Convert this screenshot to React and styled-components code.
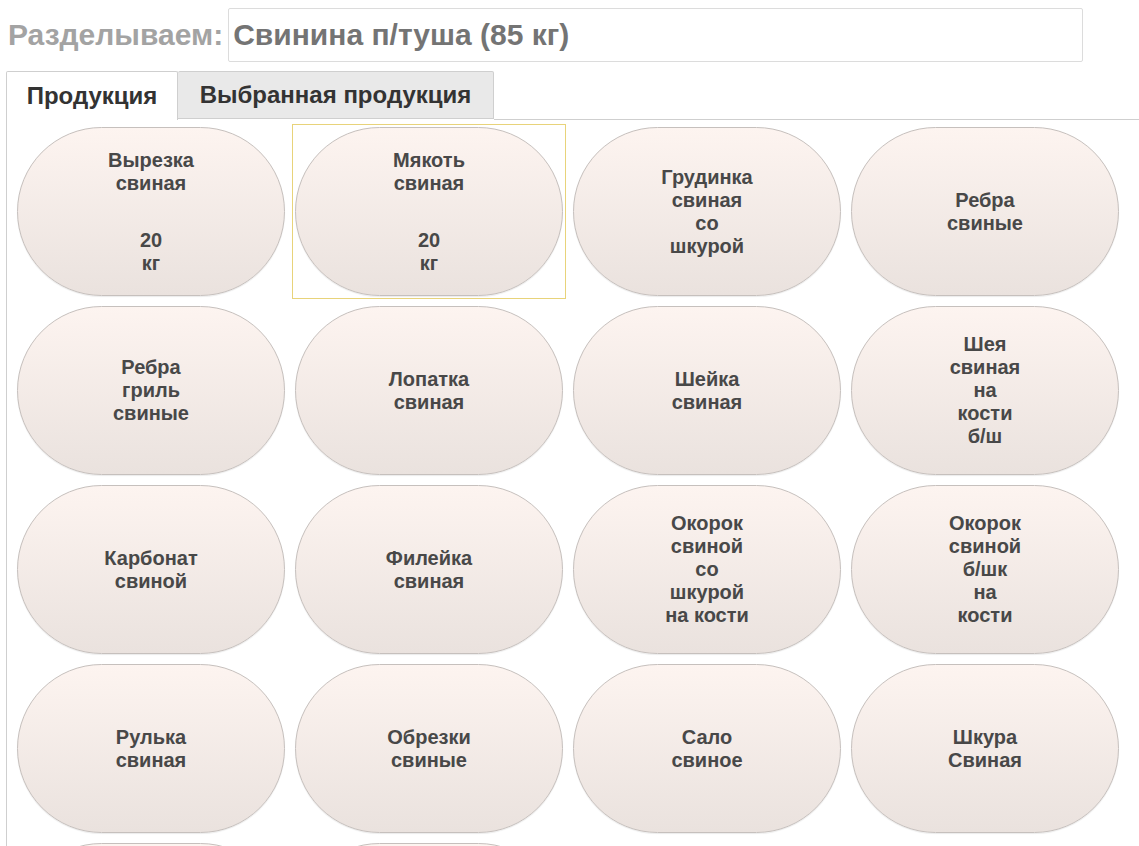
import React from "react";
import styled, { createGlobalStyle } from "styled-components";

const GlobalStyle = createGlobalStyle`
    body {
        margin: 0;
        background: #ffffff;
        font-family: "Liberation Sans", Arial, sans-serif;
    }
`;

const products = [
    { lines: ["Вырезка", "свиная"], weight: "20" },
    { lines: ["Мякоть", "свиная"], weight: "20", selected: true },
    { lines: ["Грудинка", "свиная", "со", "шкурой"] },
    { lines: ["Ребра", "свиные"] },
    { lines: ["Ребра", "гриль", "свиные"] },
    { lines: ["Лопатка", "свиная"] },
    { lines: ["Шейка", "свиная"] },
    { lines: ["Шея", "свиная", "на", "кости", "б/ш"] },
    { lines: ["Карбонат", "свиной"] },
    { lines: ["Филейка", "свиная"] },
    { lines: ["Окорок", "свиной", "со", "шкурой", "на кости"] },
    { lines: ["Окорок", "свиной", "б/шк", "на", "кости"] },
    { lines: ["Рулька", "свиная"] },
    { lines: ["Обрезки", "свиные"] },
    { lines: ["Сало", "свиное"] },
    { lines: ["Шкура", "Свиная"] },
    { lines: ["Кости", "свиные"] },
    { lines: ["Жир", "свиной"] },
];

const App = () => {
    return (
        <>
            <GlobalStyle />
            <StPage>
                <StHeader>
                    <StLabel>Разделываем:</StLabel>
                    <StField>Свинина п/туша (85 кг)</StField>
                </StHeader>
                <StTabs>
                    <StTab active>Продукция</StTab>
                    <StTab>Выбранная продукция</StTab>
                    <StTabRest />
                </StTabs>
                <StPanel>
                    {products.map((p, i) => (
                        <StCell key={i} selected={p.selected}>
                            <StProduct>
                                <div>
                                    {p.lines.map((l, j) => (
                                        <div key={j}>{l}</div>
                                    ))}
                                </div>
                                {p.weight && (
                                    <StWeight>
                                        <div>{p.weight}</div>
                                        <div>кг</div>
                                    </StWeight>
                                )}
                            </StProduct>
                        </StCell>
                    ))}
                </StPanel>
            </StPage>
        </>
    );
};

export default App;

const StPage = styled.div`
    padding-left: 6px;
`;

const StHeader = styled.div`
    display: flex;
    align-items: center;
    padding-top: 8px;
    height: 54px;
`;

const StLabel = styled.div`
    padding-left: 2px;
    font-size: 30px;
    font-weight: bold;
    color: #a3a3a3;
`;

const StField = styled.div`
    box-sizing: border-box;
    display: flex;
    align-items: center;
    margin-left: 5px;
    padding-left: 4px;
    width: 855px;
    height: 54px;
    border: 1px solid #dcdcdc;
    border-radius: 2px;
    font-size: 30px;
    font-weight: bold;
    color: #747474;
`;

const StTabs = styled.div`
    display: flex;
    margin-top: 9px;
    height: 49px;
`;

const StTab = styled.div`
    box-sizing: border-box;
    display: flex;
    align-items: center;
    justify-content: center;
    width: ${(p) => (p.active ? "172px" : "316px")};
    height: ${(p) => (p.active ? "49px" : "48px")};
    border: 1px solid #cfcfcf;
    border-bottom: ${(p) => (p.active ? "none" : "1px solid #cfcfcf")};
    border-left: ${(p) => (p.active ? "1px solid #cfcfcf" : "none")};
    border-radius: 2px 2px 0 0;
    background: ${(p) => (p.active ? "#ffffff" : "#e9e9e9")};
    font-size: 24px;
    font-weight: bold;
    color: #333333;
`;

const StTabRest = styled.div`
    flex: 1;
    border-bottom: 1px solid #cfcfcf;
    height: 48px;
`;

const StPanel = styled.div`
    display: grid;
    grid-template-columns: repeat(4, 274px);
    grid-auto-rows: 175px;
    column-gap: 4px;
    row-gap: 4px;
    padding: 4px 0 0 7px;
    border-left: 1px solid #cfcfcf;
`;

const StCell = styled.div`
    box-sizing: border-box;
    padding: 2px;
    border: 1px solid ${(p) => (p.selected ? "#e8d37a" : "transparent")};
`;

const StProduct = styled.div`
    box-sizing: border-box;
    display: flex;
    flex-direction: column;
    align-items: center;
    justify-content: center;
    height: 100%;
    border: 1px solid #c6c0bd;
    border-radius: 90px;
    background: linear-gradient(#fdf4f0, #eae2de);
    box-shadow: 0 1px 1px rgba(0, 0, 0, 0.08);
    font-size: 20px;
    font-weight: bold;
    line-height: 23px;
    color: #484848;
    text-align: center;
`;

const StWeight = styled.div`
    margin-top: 34px;
`;
